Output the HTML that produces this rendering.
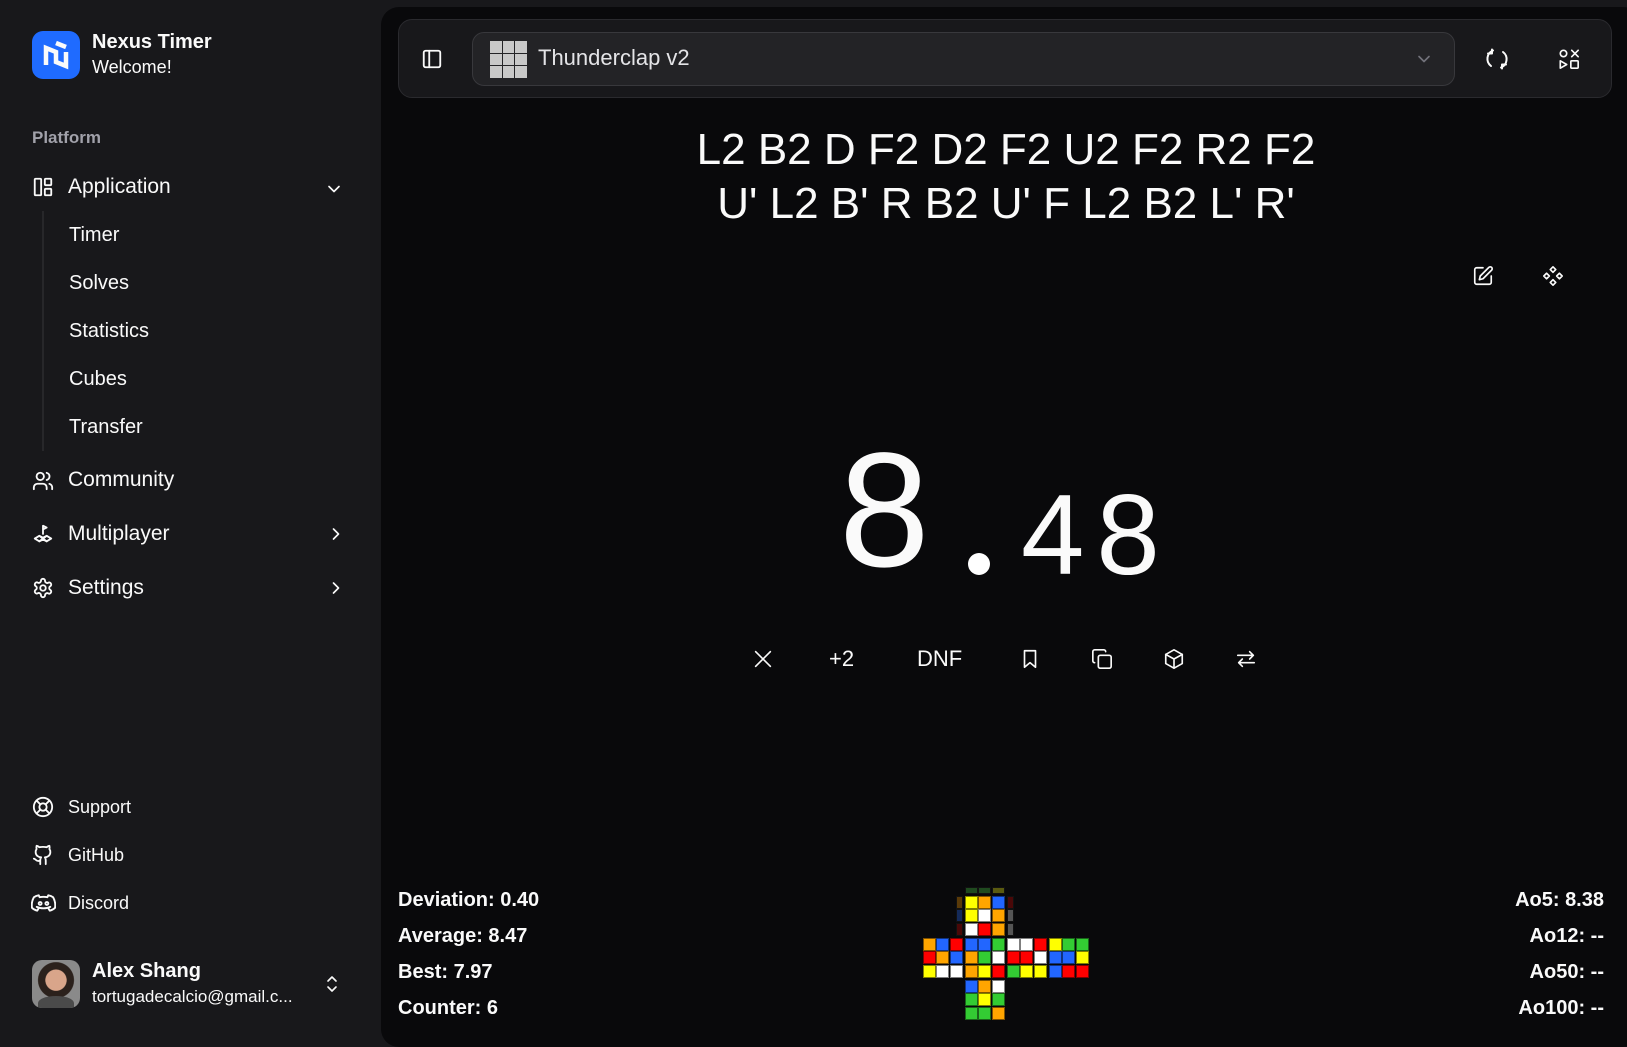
<!DOCTYPE html>
<html><head><meta charset="utf-8"><style>
*{margin:0;padding:0;box-sizing:border-box}
body{width:1627px;height:1029px;background:#18181b;font-family:"Liberation Sans",sans-serif;color:#fafafa;position:relative;overflow:hidden}
.a{position:absolute;white-space:nowrap}
svg.i{position:absolute;fill:none;stroke:#fafafa;stroke-width:2;stroke-linecap:round;stroke-linejoin:round}
.nav{font-size:21px;line-height:24px}
.sub{font-size:20px;line-height:24px}
.ft{font-size:18px;line-height:22px}
.st{font-size:20px;font-weight:bold;line-height:24px}
.c{position:absolute;width:13px;height:13px;border:1px solid rgba(0,0,0,.5)}
</style></head><body>
<!-- sidebar -->
<div class="a" style="left:32px;top:31px;width:48px;height:48px;border-radius:11px;background:#1f6bff"></div>
<svg class="i" style="left:32px;top:31px;stroke-width:4.5;stroke-linecap:butt;stroke-linejoin:miter" width="48" height="48" viewBox="0 0 48 48"><path d="M14 34V17l10 4v10l10 4V21"/><path d="M24 12l10 4"/></svg>
<div class="a" style="left:92px;top:31px;font-size:20px;font-weight:bold">Nexus Timer</div>
<div class="a" style="left:92px;top:57px;font-size:18px">Welcome!</div>
<div class="a" style="left:32px;top:128px;font-size:17px;color:#a1a1aa;font-weight:bold">Platform</div>
<svg class="i" style="left:32px;top:176px" width="22" height="22" viewBox="0 0 24 24"><rect x="3" y="3" width="7" height="18" rx="1"/><rect x="14" y="3" width="7" height="7" rx="1"/><rect x="14" y="14" width="7" height="7" rx="1"/></svg>
<div class="a nav" style="left:68px;top:175px">Application</div>
<svg class="i" style="left:324px;top:179px" width="20" height="20" viewBox="0 0 24 24"><path d="M6 9l6 6 6-6"/></svg>
<div class="a" style="left:42px;top:211px;width:2px;height:240px;background:#27272a"></div>
<div class="a sub" style="left:69px;top:223px">Timer</div>
<div class="a sub" style="left:69px;top:271px">Solves</div>
<div class="a sub" style="left:69px;top:319px">Statistics</div>
<div class="a sub" style="left:69px;top:367px">Cubes</div>
<div class="a sub" style="left:69px;top:415px">Transfer</div>
<svg class="i" style="left:32px;top:470px" width="22" height="22" viewBox="0 0 24 24"><circle cx="9" cy="7" r="4"/><path d="M2 21v-2a4 4 0 0 1 4-4h6a4 4 0 0 1 4 4v2M16 3.1a4 4 0 0 1 0 7.8M22 21v-2a4 4 0 0 0-3-3.9"/></svg>
<div class="a nav" style="left:68px;top:468px">Community</div>
<svg class="i" style="left:32px;top:523px" width="22" height="22" viewBox="0 0 24 24"><path d="M12 12V3l4 2-4 2"/><path d="M3 17l5-3 4 2 4-2 5 3-5 3-4-2-4 2z"/><path d="M8 14l8 6M16 14l-8 6"/></svg>
<div class="a nav" style="left:68px;top:522px">Multiplayer</div>
<svg class="i" style="left:326px;top:524px" width="20" height="20" viewBox="0 0 24 24"><path d="M9 6l6 6-6 6"/></svg>
<svg class="i" style="left:32px;top:577px" width="22" height="22" viewBox="0 0 24 24"><circle cx="12" cy="12" r="3"/><path d="M12.2 2h-.4a2 2 0 0 0-2 2v.2a2 2 0 0 1-1 1.7l-.4.3a2 2 0 0 1-2 0l-.2-.1a2 2 0 0 0-2.7.7l-.2.4a2 2 0 0 0 .7 2.7l.2.1a2 2 0 0 1 1 1.7v.5a2 2 0 0 1-1 1.7l-.2.1a2 2 0 0 0-.7 2.7l.2.4a2 2 0 0 0 2.7.7l.2-.1a2 2 0 0 1 2 0l.4.3a2 2 0 0 1 1 1.7V20a2 2 0 0 0 2 2h.4a2 2 0 0 0 2-2v-.2a2 2 0 0 1 1-1.7l.4-.3a2 2 0 0 1 2 0l.2.1a2 2 0 0 0 2.7-.7l.2-.4a2 2 0 0 0-.7-2.7l-.2-.1a2 2 0 0 1-1-1.7v-.5a2 2 0 0 1 1-1.7l.2-.1a2 2 0 0 0 .7-2.7l-.2-.4a2 2 0 0 0-2.7-.7l-.2.1a2 2 0 0 1-2 0l-.4-.3a2 2 0 0 1-1-1.7V4a2 2 0 0 0-2-2z"/></svg>
<div class="a nav" style="left:68px;top:576px">Settings</div>
<svg class="i" style="left:326px;top:578px" width="20" height="20" viewBox="0 0 24 24"><path d="M9 6l6 6-6 6"/></svg>

<svg class="i" style="left:32px;top:796px" width="22" height="22" viewBox="0 0 24 24"><circle cx="12" cy="12" r="10"/><circle cx="12" cy="12" r="4"/><path d="M4.9 4.9l4.3 4.3M14.8 14.8l4.3 4.3M14.8 9.2l4.3-4.3M9.2 14.8l-4.3 4.3"/></svg>
<div class="a ft" style="left:68px;top:796px">Support</div>
<svg class="i" style="left:32px;top:844px" width="22" height="22" viewBox="0 0 24 24"><path d="M15 22v-4a4.8 4.8 0 0 0-1-3.5c3 0 6-2 6-5.5.1-1.3-.3-2.5-1-3.5.3-1.200.3-2.4 0-3.5 0 0-1 0-3 1.5-2.6-.5-5.4-.5-8 0C6 2 5 2 5 2c-.3 1.1-.3 2.3 0 3.5A5.4 5.4 0 0 0 4 9c0 3.5 3 5.5 6 5.5-.4.5-.7 1.1-.8 1.700-.2.6-.2 1.2-.2 1.8v4M9 18c-4.5 2-5-2-7-2"/></svg>
<div class="a ft" style="left:68px;top:844px">GitHub</div>
<svg class="i" style="left:31px;top:892px" width="25" height="22" viewBox="0 0 26 22"><path d="M8 3c-2 .3-3.5.9-5 2-2 3.5-2.5 7.5-2 11 1.5 1.5 3.5 2.5 5.5 3l1.5-2.5M18 3c2 .3 3.5.9 5 2 2 3.5 2.5 7.5 2 11-1.5 1.5-3.5 2.5-5.5 3L18 16.5M8 3l1 2c2.5-.5 5.5-.5 8 0l1-2M6 15c4 2 10 2 14 0"/><circle cx="9.5" cy="11.5" r="1.5"/><circle cx="16.5" cy="11.5" r="1.5"/></svg>
<div class="a ft" style="left:68px;top:892px">Discord</div>

<div class="a" style="left:32px;top:960px;width:48px;height:48px;border-radius:10px;background:radial-gradient(circle at 50% 42%,#d9a58a 0 28%,#2b211c 30% 48%,#8a8a8a 50%);overflow:hidden"><div style="position:absolute;left:6px;top:36px;width:36px;height:14px;border-radius:50% 50% 0 0;background:#4a4a4a"></div></div>
<div class="a" style="left:92px;top:960px;font-size:20px;font-weight:bold">Alex Shang</div>
<div class="a" style="left:92px;top:987px;font-size:17px">tortugadecalcio@gmail.c...</div>
<svg class="i" style="left:324px;top:974px;stroke-width:1.6" width="16" height="20" viewBox="0 0 16 20"><path d="M4 7l4-4 4 4M4 13l4 4 4-4"/></svg>

<!-- main -->
<div class="a" style="left:381px;top:7px;width:1260px;height:1040px;background:#09090b;border-radius:18px"></div>
<div class="a" style="left:398px;top:19px;width:1214px;height:79px;background:#18181b;border:1px solid #2a2a2e;border-radius:14px"></div>
<svg class="i" style="left:421px;top:48px" width="22" height="22" viewBox="0 0 24 24"><rect x="3" y="3" width="18" height="18" rx="2"/><path d="M9 3v18"/></svg>
<div class="a" style="left:472px;top:32px;width:983px;height:54px;background:#232326;border:1px solid #38383c;border-radius:12px"></div>
<div class="a" style="left:490px;top:41px;width:37px;height:37px;display:grid;grid-template-columns:repeat(3,1fr);gap:1px">
<i style="background:#c8c8c8"></i><i style="background:#c8c8c8"></i><i style="background:#c8c8c8"></i><i style="background:#c8c8c8"></i><i style="background:#c8c8c8"></i><i style="background:#c8c8c8"></i><i style="background:#c8c8c8"></i><i style="background:#c8c8c8"></i><i style="background:#c8c8c8"></i></div>
<div class="a" style="left:538px;top:45px;font-size:22px;color:#e4e4e7">Thunderclap v2</div>
<svg class="i" style="left:1414px;top:49px;stroke:#71717a" width="20" height="20" viewBox="0 0 24 24"><path d="M6 9l6 6 6-6"/></svg>
<svg class="i" style="left:1485px;top:47px" width="24" height="24" viewBox="0 0 24 24"><path d="M8 3.5A9 9 0 0 0 6 19M16 20.5A9 9 0 0 0 18 5"/><path d="M7 2.5v4H3M17 21.5v-4h4"/></svg>
<svg class="i" style="left:1558px;top:48px;stroke-width:1.8" width="22" height="22" viewBox="0 0 24 24"><circle cx="6" cy="6" r="3.5"/><path d="M15 2.5l7 7M22 2.5l-7 7M2.5 14v8l7-4z"/><rect x="14" y="14" width="8" height="8" rx="1"/></svg>

<div class="a" style="left:581px;width:850px;top:123px;text-align:center;font-size:44px;line-height:54px">L2 B2 D F2 D2 F2 U2 F2 R2 F2<br>U' L2 B' R B2 U' F L2 B2 L' R'</div>
<svg class="i" style="left:1472px;top:265px;stroke-width:1.8" width="22" height="22" viewBox="0 0 24 24"><path d="M12 3H5a2 2 0 0 0-2 2v14a2 2 0 0 0 2 2h14a2 2 0 0 0 2-2v-7"/><path d="M18.4 2.6a2.1 2.1 0 0 1 3 3L12 15l-4 1 1-4z"/></svg>
<svg class="i" style="left:1542px;top:265px;stroke-width:1.8" width="22" height="22" viewBox="0 0 24 24"><path d="M12 2l3 3-3 3-3-3zM19 9l3 3-3 3-3-3zM5 9l3 3-3 3-3-3zM12 16l3 3-3 3-3-3z"/></svg>

<div class="a" style="left:839px;top:428px;font-size:163px;line-height:1">8</div>
<div class="a" style="left:968px;top:553px;width:22px;height:22px;border-radius:50%;background:#fff"></div>
<div class="a" style="left:1021px;top:479px;font-size:114px;line-height:1;letter-spacing:12px">48</div>

<svg class="i" style="left:752px;top:648px;stroke-width:1.8" width="22" height="22" viewBox="0 0 24 24"><path d="M4 4l16 16M20 4L4 20"/></svg>
<div class="a" style="left:829px;top:646px;font-size:22px">+2</div>
<div class="a" style="left:917px;top:646px;font-size:22px">DNF</div>
<svg class="i" style="left:1019px;top:648px;stroke-width:1.8" width="22" height="22" viewBox="0 0 24 24"><path d="M6 3h12v18l-6-5-6 5z"/></svg>
<svg class="i" style="left:1091px;top:648px;stroke-width:1.8" width="22" height="22" viewBox="0 0 24 24"><rect x="8" y="8" width="14" height="14" rx="2"/><path d="M4 16a2 2 0 0 1-2-2V4a2 2 0 0 1 2-2h10a2 2 0 0 1 2 2"/></svg>
<svg class="i" style="left:1163px;top:648px;stroke-width:1.8" width="22" height="22" viewBox="0 0 24 24"><path d="M12 2l9 5v10l-9 5-9-5V7z"/><path d="M3 7l9 5 9-5M12 12v10"/></svg>
<svg class="i" style="left:1235px;top:648px;stroke-width:1.8" width="22" height="22" viewBox="0 0 24 24"><path d="M3 8h17M16 4l4 4-4 4M21 16H4M8 12l-4 4 4 4"/></svg>

<div class="a st" style="left:398px;top:888px">Deviation: 0.40</div>
<div class="a st" style="left:398px;top:924px">Average: 8.47</div>
<div class="a st" style="left:398px;top:960px">Best: 7.97</div>
<div class="a st" style="left:398px;top:996px">Counter: 6</div>
<div class="a st" style="right:23px;top:888px;text-align:right">Ao5: 8.38</div>
<div class="a st" style="right:23px;top:924px;text-align:right">Ao12: --</div>
<div class="a st" style="right:23px;top:960px;text-align:right">Ao50: --</div>
<div class="a st" style="right:23px;top:996px;text-align:right">Ao100: --</div>

<div id="net"></div>
<script>
var C={Y:'#ffff00',O:'#ffa500',B:'#2266ff',W:'#ffffff',R:'#ff0000',G:'#33cc33'};
var faces=[[965,896,'YOBYWOWRO'],[923,938,'OBRROBYWW'],[965,938,'BBGOGWOYR'],[1007,938,'WWRRRWGYY'],[1049,938,'YGGBBYBRR'],[965,980,'BOWGYGGGO']];
var h='';
faces.forEach(function(f){for(var i=0;i<9;i++){h+='<div class="c" style="left:'+(f[0]+(i%3)*13.3)+'px;top:'+(f[1]+Math.floor(i/3)*13.3)+'px;background:'+C[f[2][i]]+'"></div>';}});
var strips=[[965,887,13,7,'#1f4a1f'],[978.3,887,13,7,'#1f4a1f'],[991.6,887,13,7,'#5a5a10'],[956,896,7,13,'#5a3a08'],[956,909.3,7,13,'#142a5a'],[956,922.6,7,13,'#4a0808'],[1007,896,7,13,'#4a0808'],[1007,909.3,7,13,'#555'],[1007,922.6,7,13,'#555']];
strips.forEach(function(s){h+='<div class="a" style="left:'+s[0]+'px;top:'+s[1]+'px;width:'+s[2]+'px;height:'+s[3]+'px;background:'+s[4]+';border:1px solid #111"></div>';});
document.getElementById('net').innerHTML=h;
</script>
</body></html>
